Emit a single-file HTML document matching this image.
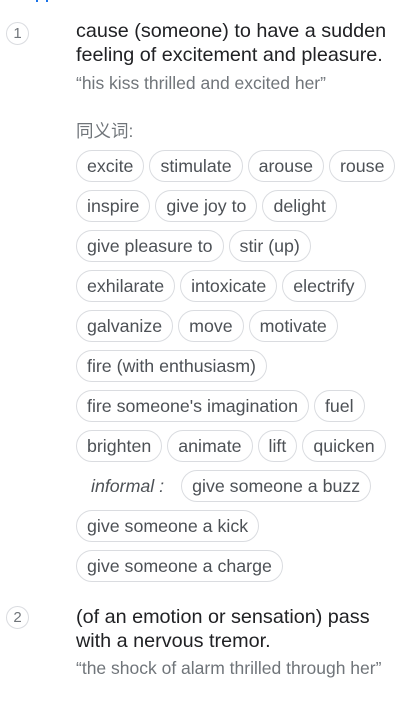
<!DOCTYPE html>
<html><head><meta charset="utf-8"><style>
body{margin:0;width:419px;height:708px;background:#fff;font-family:"Liberation Sans","Noto Sans CJK SC",sans-serif;position:relative;overflow:hidden}
.num{position:absolute;left:6px;width:21px;height:21px;border:1px solid #dadce0;border-radius:50%;text-align:center;line-height:21px;font-size:15px;color:#70757a}
.def{position:absolute;left:76px;font-size:19.8px;line-height:24px;color:#202124;width:318px}
.ex{position:absolute;left:76px;font-size:17.5px;color:#70757a;white-space:nowrap}
.row{position:absolute;left:76px;display:flex;gap:5px;align-items:center;white-space:nowrap}
.c{height:30px;border:1px solid #dadce0;border-radius:16px;padding:0 10px;font-size:17.8px;line-height:30px;color:#4d5156}
.inf{font-style:italic;color:#4d5156;font-size:17.8px;margin-left:15px;margin-right:12px}
</style></head><body>
<div style="position:absolute;left:36px;top:0;width:2px;height:2px;background:#1a73e8"></div>
<div style="position:absolute;left:46px;top:0;width:2px;height:2px;background:#1a73e8"></div>
<div class="num" style="top:22px">1</div>
<div class="def" style="top:19px">cause (someone) to have a sudden feeling of excitement and pleasure.</div>
<div class="ex" style="top:73px">“his kiss thrilled and excited her”</div>
<div class="ex" style="top:118px">同义词:</div>
<div class="row" style="top:150px"><span class="c">excite</span><span class="c">stimulate</span><span class="c">arouse</span><span class="c">rouse</span></div>
<div class="row" style="top:190px"><span class="c">inspire</span><span class="c">give joy to</span><span class="c">delight</span></div>
<div class="row" style="top:230px"><span class="c">give pleasure to</span><span class="c">stir (up)</span></div>
<div class="row" style="top:270px"><span class="c">exhilarate</span><span class="c">intoxicate</span><span class="c">electrify</span></div>
<div class="row" style="top:310px"><span class="c">galvanize</span><span class="c">move</span><span class="c">motivate</span></div>
<div class="row" style="top:350px"><span class="c">fire (with enthusiasm)</span></div>
<div class="row" style="top:390px"><span class="c">fire someone's imagination</span><span class="c">fuel</span></div>
<div class="row" style="top:430px"><span class="c">brighten</span><span class="c">animate</span><span class="c">lift</span><span class="c">quicken</span></div>
<div class="row" style="top:470px"><span class="inf">informal :</span><span class="c">give someone a buzz</span></div>
<div class="row" style="top:510px"><span class="c">give someone a kick</span></div>
<div class="row" style="top:550px"><span class="c">give someone a charge</span></div>
<div class="num" style="top:606px">2</div>
<div class="def" style="top:605px">(of an emotion or sensation) pass with a nervous tremor.</div>
<div class="ex" style="top:658px">“the shock of alarm thrilled through her”</div>
</body></html>
